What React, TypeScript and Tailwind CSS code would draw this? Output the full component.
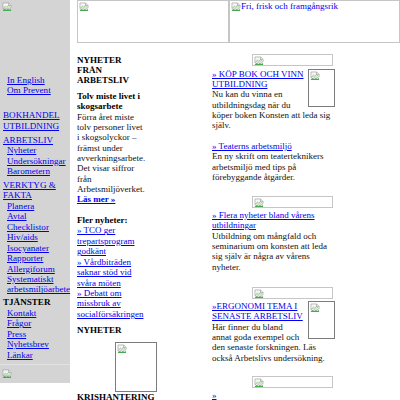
import React from 'react';

// Chrome-style placeholder for an image that failed to load
const BrokenIcon = () => (
  <svg width="10" height="10" viewBox="0 0 16 16" className="block shrink-0">
    <path d="M1.5 1.5h9l4 4v3.5l-2.5 1.8-2.5-1.8-2.5 1.8-2.5-1.8-3 1.8z" fill="#f6f6f6" stroke="#9c9c9c" />
    <path d="M10.5 1.5v4h4" fill="#e4e4e4" stroke="#9c9c9c" />
    <path d="M1.5 12.8l3-1.8 2.5 1.8 2.5-1.8 2.5 1.8 2.5-1.8v3.5h-13z" fill="#4aa84f" />
    <path d="M3 9l2.5-2.5 2 1.6 2.5-2.2 3 2.6" fill="none" stroke="#7bbf6a" strokeWidth="1.2" />
  </svg>
);

const link = 'text-[#0000ee] underline';

const SideLink = ({ children, head, className = '' }: { children: React.ReactNode; head?: boolean; className?: string }) => (
  <a href="#" className={`${link} block whitespace-nowrap ${head ? 'pl-[3px]' : 'pl-[7px]'} ${className}`}>
    {children}
  </a>
);

const Sidebar = () => (
  <aside className="w-[70px] h-[383px] shrink-0 bg-[#d4d4d4] flex flex-col text-[9.1px] leading-[10.45px]">
    <div className="pt-[2px] pl-[2px]">
      <BrokenIcon />
    </div>
    <div className="mt-[63px]">
      <SideLink>In English</SideLink>
      <SideLink>Om Prevent</SideLink>
    </div>
    <SideLink head className="mt-[13.8px]">BOKHANDEL</SideLink>
    <SideLink head className="mt-[1px]">UTBILDNING</SideLink>
    <SideLink head className="mt-[3px]">ARBETSLIV</SideLink>
    <SideLink>Nyheter</SideLink>
    <SideLink>Undersökningar</SideLink>
    <SideLink>Barometern</SideLink>
    <SideLink head className="mt-[3.5px]">
      VERKTYG &amp;
      <br />
      FAKTA
    </SideLink>
    <SideLink>Planera</SideLink>
    <SideLink>Avtal</SideLink>
    <SideLink>Checklistor</SideLink>
    <SideLink>Hiv/aids</SideLink>
    <SideLink>Isocyanater</SideLink>
    <SideLink>Rapporter</SideLink>
    <SideLink>Allergiforum</SideLink>
    <SideLink>Systematiskt</SideLink>
    <SideLink>arbetsmiljöarbete</SideLink>
    <div className="mt-[2.5px] pl-[3px] font-bold text-black">TJÄNSTER</div>
    <SideLink>Kontakt</SideLink>
    <SideLink>Frågor</SideLink>
    <SideLink>Press</SideLink>
    <SideLink>Nyhetsbrev</SideLink>
    <SideLink>Länkar</SideLink>
    <div className="mt-[4px] h-px bg-[#e2e2e2]" />
    <div className="mt-[4px] pl-[2px]">
      <BrokenIcon />
    </div>
  </aside>
);

const Banner = ({ className = '' }: { className?: string }) => (
  <div className={`ml-[40px] w-[81px] h-[12px] border border-[#c6c6c6] p-px ${className}`}>
    <BrokenIcon />
  </div>
);

const Thumb = () => (
  <div className="float-right ml-[3.8px] w-[27px] h-[38px] border border-[#7c7c7c] p-px">
    <BrokenIcon />
  </div>
);

export default function App() {
  return (
    <div className="w-[400px] h-[400px] overflow-hidden bg-white flex font-['Liberation_Serif',serif] text-[9px] leading-[1.15] text-[#111]">
      <Sidebar />

      <main className="ml-[7px] flex flex-col">
        <div className="flex h-[43px]">
          <div className="w-[152px] h-[43px] border border-[#c6c6c6] p-px">
            <BrokenIcon />
          </div>
          <div className="w-[171px] h-[43px] border border-[#c6c6c6] p-px flex items-start">
            <BrokenIcon />
            <span className="text-[#0000ee] -mt-px">Fri, frisk och framgångsrik</span>
          </div>
        </div>

        <div className="flex">
          {/* left news column */}
          <div className="w-[135px] shrink-0 pt-[11.5px]">
            <div className="w-[70px] font-bold text-black">NYHETER FRÅN ARBETSLIV</div>
            <div className="w-[70px] mt-[5.5px]">
              <b className="text-black">Tolv miste livet i skogsarbete</b>
              <br />
              Förra året miste tolv personer livet i skogsolyckor – främst under avverkningsarbete. Det visar siffror från Arbetsmiljöverket.
              <br />
              <a href="#" className={`${link} font-bold`}>Läs mer »</a>
            </div>
            <div className="w-[70px] mt-[10.2px] leading-[10.42px]">
              <b className="text-black">Fler nyheter:</b>
              <br />
              <a href="#" className={link}>» TCO ger trepartsprogram godkänt</a>
              <br />
              <a href="#" className={link}>» Vårdbiträden saknar stöd vid svåra möten</a>
              <br />
              <a href="#" className={link}>» Debatt om missbruk av socialförsäkringen</a>
            </div>
            <div className="mt-[6px] font-bold text-black">NYHETER</div>
            <div className="ml-[38px] mt-[6.6px] w-[42px] h-[50px] border border-[#7c7c7c] p-px">
              <BrokenIcon />
            </div>
            <div className="font-bold text-black">KRISHANTERING</div>
          </div>

          {/* right column */}
          <div className="w-[123px] shrink-0 pt-[11px]">
            <Banner />
            <div className="mt-[2.5px]">
              <Thumb />
              <a href="#" className={link}>» KÖP BOK OCH VINN UTBILDNING</a>
              <br />
              Nu kan du vinna en utbildningsdag när du köper boken Konsten att leda sig själv.
              <br />
              <br />
              <a href="#" className={link}>» Teaterns arbetsmiljö</a>
              <br />
              En ny skrift om teaterteknikers arbetsmiljö med tips på förebyggande åtgärder.
            </div>

            <Banner className="mt-[13.6px]" />
            <div className="mt-[2px]">
              <a href="#" className={link}>» Flera nyheter bland vårens utbildningar</a>
              <br />
              Utbildning om mångfald och seminarium om konsten att leda sig själv är några av vårens nyheter.
            </div>

            <Banner className="mt-[14.6px]" />
            <div className="mt-[2.3px]">
              <Thumb />
              <a href="#" className={link}>»ERGONOMI TEMA I SENASTE ARBETSLIV</a>
              <br />
              Här finner du bland annat goda exempel och den senaste forskningen. Läs också Arbetslivs undersökning.
            </div>

            <Banner className="mt-[12.9px]" />
            <div className="mt-[2px]">
              <a href="#" className={link}>»</a>
            </div>
          </div>
        </div>
      </main>
    </div>
  );
}
